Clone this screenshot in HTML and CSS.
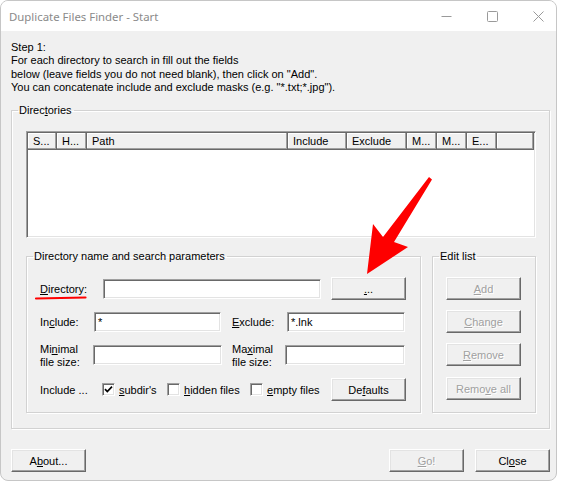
FILE: index.html
```html
<!DOCTYPE html>
<html>
<head>
<meta charset="utf-8">
<title>Duplicate Files Finder - Start</title>
<link rel="stylesheet" href="styles.css">
</head>
<body>
<div class="window">
  <div class="titlebar">
    <span class="title">Duplicate Files Finder - Start</span>
    <div class="controls">
      <svg class="ctl" width="11" height="11" viewBox="0 0 11 11"><path d="M0.5 5.5H10.5" stroke="#9a9a9a" stroke-width="1"/></svg>
      <svg class="ctl" width="11" height="11" viewBox="0 0 11 11"><rect x="0.5" y="0.5" width="10" height="10" rx="1" fill="none" stroke="#9a9a9a" stroke-width="1"/></svg>
      <svg class="ctl" width="11" height="11" viewBox="0 0 11 11"><path d="M0.5 0.5L10.5 10.5M10.5 0.5L0.5 10.5" stroke="#9a9a9a" stroke-width="1"/></svg>
    </div>
  </div>
  <div class="content">
    <p class="intro">Step 1:<br>For each directory to search in fill out the fields<br>below (leave fields you do not need blank), then click on "Add".<br>You can concatenate include and exclude masks (e.g. "*.txt;*.jpg").</p>
    <fieldset class="group dirs">
      <legend>Direc<u>t</u>ories</legend>
      <div class="dirs-body">
        <div class="listview">
          <div class="lv-header">
            <span class="col">S...</span>
            <span class="col">H...</span>
            <span class="col">Path</span>
            <span class="col">Include</span>
            <span class="col">Exclude</span>
            <span class="col">M...</span>
            <span class="col">M...</span>
            <span class="col">E...</span>
            <span class="col"></span>
          </div>
        </div>
        <div class="lower">
          <fieldset class="group params">
            <legend>Directory name and search parameters</legend>
            <div class="params-body">
              <div class="row r1">
                <label class="lbl l-dir"><u>D</u>irectory:</label>
                <span class="input in-dir"></span>
                <button class="btn btn-browse"><u>.</u>..</button>
              </div>
              <div class="row r2">
                <label class="lbl l-inc">In<u>c</u>lude:</label>
                <span class="input in-inc">*</span>
                <label class="lbl l-exc"><u>E</u>xclude:</label>
                <span class="input in-exc">*.lnk</span>
              </div>
              <div class="row r3">
                <label class="lbl l-min two">Mi<u>n</u>imal<br>file size:</label>
                <span class="input in-min"></span>
                <label class="lbl l-max two">Ma<u>x</u>imal<br>file size:</label>
                <span class="input in-max"></span>
              </div>
              <div class="row r4">
                <span class="lbl l-incl">Include ...</span>
                <span class="check c1"><span class="box"><svg width="9" height="9" viewBox="0 0 9 9"><path d="M1 4.2L3.3 6.6L8 1.6" fill="none" stroke="#000" stroke-width="1.7"/></svg></span><span class="ctext"><u>s</u>ubdir's</span></span>
                <span class="check c2"><span class="box"></span><span class="ctext"><u>h</u>idden files</span></span>
                <span class="check c3"><span class="box"></span><span class="ctext"><u>e</u>mpty files</span></span>
                <button class="btn">De<u>f</u>aults</button>
              </div>
            </div>
          </fieldset>
          <fieldset class="group editlist">
            <legend>Edit list</legend>
            <div class="edit-body">
              <button class="btn" disabled><u>A</u>dd</button>
              <button class="btn" disabled><u>C</u>hange</button>
              <button class="btn" disabled><u>R</u>emove</button>
              <button class="btn last" disabled>Remo<u>v</u>e all</button>
            </div>
          </fieldset>
        </div>
      </div>
    </fieldset>
    <div class="footer">
      <button class="btn">A<u>b</u>out...</button>
      <button class="btn go" disabled><u>G</u>o!</button>
      <button class="btn">Cl<u>o</u>se</button>
    </div>
  </div>
  <svg class="annot" width="562" height="484" viewBox="0 0 562 484">
    <path d="M36 298.5L85.5 297.5" stroke="#fe0000" stroke-width="2.2" stroke-linecap="round"/>
    <polygon points="429,177 432,179.5 394,242 408,247 367,274 373,224 383,237" fill="#fe0000"/>
  </svg>
</div>
</body>
</html>
```

FILE: styles.css
```css
html, body {
  margin: 0;
  padding: 0;
  background: #ffffff;
}
body {
  font-family: "Liberation Sans", Arial, sans-serif;
  font-size: 11px;
  color: #000;
}
.window {
  position: relative;
  width: 557px;
  height: 481px;
  box-sizing: border-box;
  border: 1px solid #c6c6c6;
  border-radius: 8px;
  overflow: hidden;
  background: #f0f0f0;
  display: flex;
  flex-direction: column;
}
.titlebar {
  height: 30px;
  flex: none;
  background: #ffffff;
  display: flex;
  align-items: center;
}
.title {
  margin-left: 8px;
  margin-top: 1px;
  color: #8a8a8a;
  font-family: "Noto Sans", "Open Sans", sans-serif;
  font-size: 11.4px;
}
.controls {
  margin-left: auto;
  margin-right: 12px;
  display: flex;
  align-items: center;
  gap: 35px;
  margin-top: 1px;
}
.ctl { display: block; }

.content {
  flex: 1;
  padding: 10px 6px 0 10px;
  display: flex;
  flex-direction: column;
}
.intro {
  margin: 0 0 10px 0;
  line-height: 13.3px;
}
u { text-decoration: underline; text-underline-offset: 1px; }

/* group boxes */
.group {
  margin: 0;
  padding: 0;
  border: 1px solid #d2d2d2;
  box-shadow: inset 1px 1px 0 #fff, 1px 1px 0 #fff;
  min-width: 0;
  box-sizing: border-box;
}
.group > legend {
  margin-left: 6px;
  padding: 0 2px 0 1px;
  line-height: 13px;
}
.dirs {
  width: 539px;
}
.dirs-body {
  padding: 14px 13px 15px 14px;
}
.listview {
  width: 510px;
  height: 107px;
  box-sizing: border-box;
  background: #fff;
  border: 1px solid;
  border-color: #a0a0a0 #fff #fff #a0a0a0;
  box-shadow: inset 1px 1px 0 #696969, inset -1px -1px 0 #e3e3e3;
  padding: 1px;
}
.lv-header {
  display: grid;
  grid-template-columns: 29px 30px 201px 59px 60px 30px 30px 30px 37px;
  height: 17px;
}
.col {
  box-sizing: border-box;
  background: #f0f0f0;
  border-right: 1px solid #696969;
  border-bottom: 1px solid #696969;
  box-shadow: inset -1px -1px 0 #a0a0a0, inset 1px 1px 0 #fff;
  padding-left: 5px;
  line-height: 16px;
  white-space: nowrap;
  overflow: hidden;
}
.lower {
  margin-top: 12px;
  display: flex;
  gap: 11px;
}
.params {
  width: 395px;
  height: 163px;
}
.editlist {
  width: 104px;
  height: 163px;
}
.params-body {
  padding: 14px 0 0 13px;
  display: flex;
  flex-direction: column;
  gap: 10px;
}
.row {
  display: flex;
  align-items: center;
  height: 23px;
}
.r4 { margin-top: 2px; }
.lbl { flex: none; white-space: nowrap; }
.lbl.two { line-height: 13px; padding-top: 3px; }
.l-dir { width: 63px; }
.l-inc { width: 54px; }
.l-exc { width: 55px; margin-left: 11px; }
.l-min { width: 53px; }
.l-max { width: 53px; margin-left: 10px; }
.l-incl { width: 62px; }

.input {
  flex: none;
  box-sizing: border-box;
  height: 20px;
  background: #fff;
  border: 1px solid;
  border-color: #a0a0a0 #fff #fff #a0a0a0;
  box-shadow: inset 1px 1px 0 #696969, inset -1px -1px 0 #e3e3e3;
  padding: 2px 3px 0 3px;
  line-height: 14px;
}
.in-dir { width: 218px; margin-right: 10px; }
.in-inc { width: 127px; }
.in-exc { width: 118px; }
.in-min { width: 129px; }
.in-max { width: 120px; }

.check {
  flex: none;
  display: flex;
  align-items: center;
  gap: 4px;
  white-space: nowrap;
}
.c1 { width: 65px; }
.c2 { width: 83px; }
.c3 { width: 81px; }
.box {
  flex: none;
  width: 13px;
  height: 13px;
  box-sizing: border-box;
  background: #fff;
  border: 1px solid;
  border-color: #a0a0a0 #fff #fff #a0a0a0;
  box-shadow: inset 1px 1px 0 #696969, inset -1px -1px 0 #e3e3e3;
  display: flex;
  align-items: center;
  justify-content: center;
}
.box svg { display: block; }

.btn {
  flex: none;
  width: 75px;
  height: 23px;
  box-sizing: border-box;
  margin: 0;
  padding: 0;
  font-family: "Liberation Sans", Arial, sans-serif;
  font-size: 11px;
  color: #000;
  background: #f0f0f0;
  border: 1px solid;
  border-color: #fff #696969 #696969 #fff;
  box-shadow: inset -1px -1px 0 #a0a0a0, inset 1px 1px 0 #e3e3e3;
  line-height: 20px;
}
.btn:disabled {
  color: #a0a0a0;
  text-shadow: 1px 1px 0 #fff;
}
.btn-browse { line-height: 18px; }

.edit-body {
  padding: 14px 0 0 13px;
  display: flex;
  flex-direction: column;
  gap: 10px;
}
.edit-body .last { margin-top: 1px; }

.footer {
  margin-top: 20px;
  display: flex;
  align-items: center;
}
.footer .go { margin-left: auto; margin-right: 11px; }

.annot {
  position: absolute;
  left: -1px;
  top: -1px;
  pointer-events: none;
}
```
